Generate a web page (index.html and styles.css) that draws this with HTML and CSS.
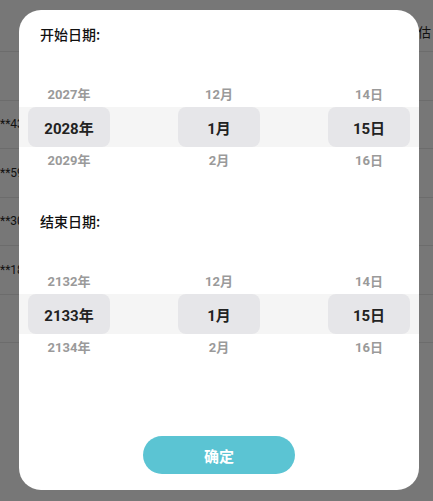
FILE: index.html
```html
<!DOCTYPE html>
<html lang="zh">
<head>
<meta charset="utf-8">
<link rel="stylesheet" href="styles.css">
</head>
<body>
<div class="page">
  <div class="row head"><span class="cell-r">估</span></div>
  <div class="row"></div>
  <div class="row"><span class="cell">**4321</span></div>
  <div class="row"><span class="cell">**5986</span></div>
  <div class="row"><span class="cell">**3012</span></div>
  <div class="row"><span class="cell">**1876</span></div>
  <div class="row"></div>
</div>
<div class="overlay">
  <div class="modal">
    <div class="section">
      <div class="label">开始日期:</div>
      <div class="picker">
        <div class="prow"><span class="item">2027年</span><span class="item">12月</span><span class="item">14日</span></div>
        <div class="prow sel"><span class="chip">2028年</span><span class="chip">1月</span><span class="chip">15日</span></div>
        <div class="prow"><span class="item">2029年</span><span class="item">2月</span><span class="item">16日</span></div>
      </div>
    </div>
    <div class="section second">
      <div class="label">结束日期:</div>
      <div class="picker">
        <div class="prow"><span class="item">2132年</span><span class="item">12月</span><span class="item">14日</span></div>
        <div class="prow sel"><span class="chip">2133年</span><span class="chip">1月</span><span class="chip">15日</span></div>
        <div class="prow"><span class="item">2134年</span><span class="item">2月</span><span class="item">16日</span></div>
      </div>
    </div>
    <div class="actions"><button class="btn">确定</button></div>
  </div>
</div>
</body>
</html>
```
FILE: styles.css
```css
* { box-sizing: border-box; }
html, body { margin: 0; padding: 0; }
body {
  width: 433px;
  height: 501px;
  overflow: hidden;
  background: #777777;
  font-family: Roboto, "Noto Sans CJK SC", sans-serif;
  position: relative;
}
.page { display: flex; flex-direction: column; }
.row {
  height: 48.5px;
  border-bottom: 1px solid #6c6c6c;
  display: flex;
  align-items: center;
  color: #111;
  font-size: 12px;
}
.row.head { height: 52px; justify-content: flex-end; padding-top: 12px; }
.cell { margin-left: 0; }
.cell-r { font-family: "Noto Sans CJK SC", sans-serif; font-size: 13px; margin-right: 2px; }

.overlay {
  position: absolute;
  inset: 0;
  padding: 10px 14px 11px 19px;
  display: flex;
}
.modal {
  flex: 1;
  background: #fff;
  border-radius: 22px;
  display: flex;
  flex-direction: column;
  padding: 14px 0 16px;
}
.section { display: flex; flex-direction: column; }
.second { margin-top: 38px; }
.label {
  font-family: "Noto Sans CJK SC", sans-serif;
  font-size: 14px;
  line-height: 20px;
  font-weight: 500;
  color: #111;
  padding-left: 21px;
}
.picker { margin-top: 37px; display: flex; flex-direction: column; }
.prow {
  display: flex;
  justify-content: space-between;
  padding: 0 9px 2px;
  height: 26px;
  align-items: center;
}
.prow.sel { height: 40px; padding-bottom: 0; background: #f5f5f5; }
.item {
  width: 82px;
  text-align: center;
  font-size: 13px;
  font-weight: 700;
  color: #9a9a9a;
}
.chip {
  width: 82px;
  height: 40px;
  border-radius: 8px;
  background: #e6e6e9;
  display: flex;
  align-items: center;
  justify-content: center;
  font-size: 15px;
  font-weight: 700;
  color: #222;
}
.actions { margin-top: auto; display: flex; justify-content: center; }
.btn {
  width: 152px;
  height: 38px;
  border: none;
  border-radius: 19px;
  background: #5bc4d3;
  color: #fff;
  font-family: "Noto Sans CJK SC", sans-serif;
  font-size: 15px;
  font-weight: 700;
  padding: 0;
}
```
